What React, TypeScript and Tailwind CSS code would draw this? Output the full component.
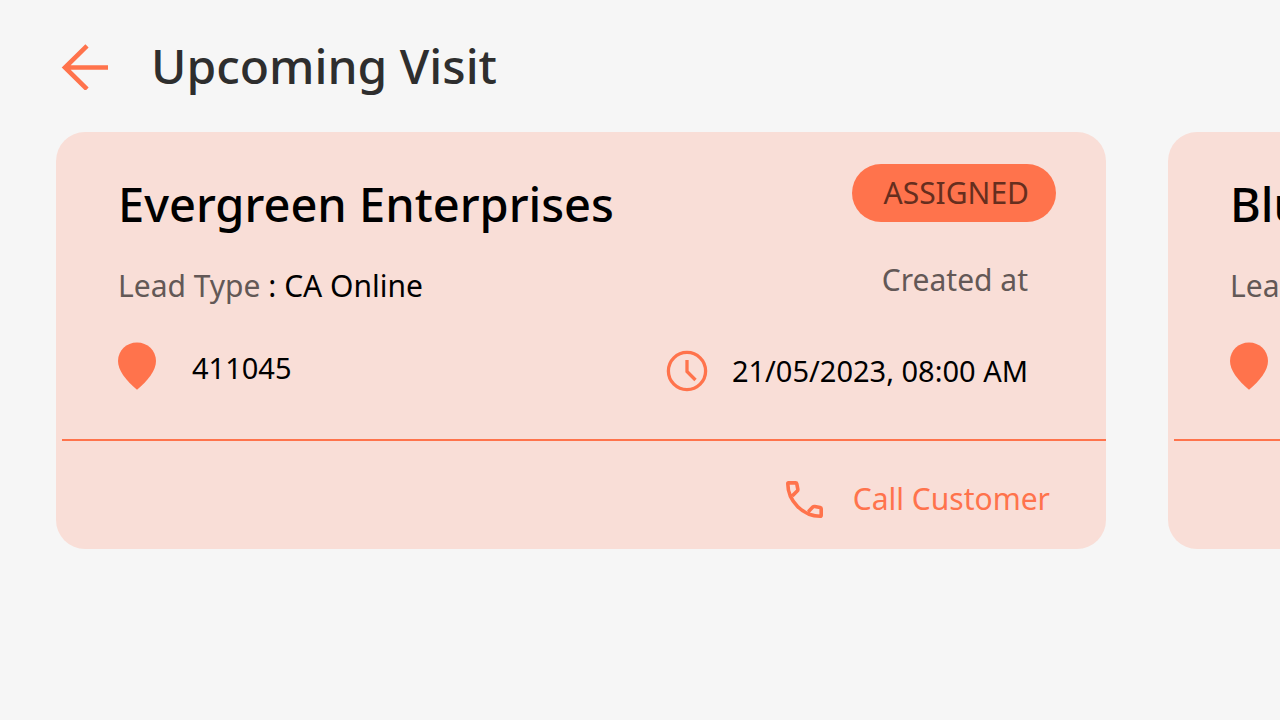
import React from "react";

type Visit = {
  name: string;
  leadType: string;
  pincode: string;
  createdAt: string;
  status: string;
  phone: string;
};

const visits: Visit[] = [
  {
    name: "Evergreen Enterprises",
    leadType: "CA Online",
    pincode: "411045",
    createdAt: "21/05/2023, 08:00 AM",
    status: "ASSIGNED",
    phone: "tel:+910000000001",
  },
  {
    name: "Blue Star Traders",
    leadType: "CA Online",
    pincode: "411045",
    createdAt: "21/05/2023, 08:00 AM",
    status: "ASSIGNED",
    phone: "tel:+910000000002",
  },
];

function ArrowLeft() {
  return (
    <svg viewBox="0 0 48 48" className="size-12" fill="none" stroke="currentColor" strokeWidth="4.6" aria-hidden="true">
      <path d="M47 25.500H4M26 3.800 4 25.500l22 21.700" />
    </svg>
  );
}

function Pin() {
  return (
    <svg viewBox="0 0 38 48" className="h-12 w-[38px]" fill="currentColor" aria-hidden="true">
      <path d="M19 .5C8.5.5 0 8.500 0 19c0 9.500 8 19.500 19 28.700 11-9.200 19-19.200 19-28.700C38 8.500 29.500.5 19 .5z" />
    </svg>
  );
}

function Clock() {
  return (
    <svg viewBox="0 0 42 42" className="size-[42px]" fill="none" stroke="currentColor" strokeWidth="3.3" aria-hidden="true">
      <circle cx="21" cy="21" r="18.6" />
      <path d="M21 10v11.500l8.500 8.500" />
    </svg>
  );
}

function Phone() {
  return (
    <svg viewBox="0 0 37 37" className="size-[37px]" fill="none" stroke="currentColor" strokeWidth="3.600" strokeLinejoin="round" aria-hidden="true">
      <path d="M2.500 1.900H9.600Q10.600 1.900 10.800 2.900L11.800 8.200Q12 9.300 11.200 10.100L6.300 14.900M22.300 30.700 26.800 26.100Q27.600 25.300 28.700 25.500L34.200 26.600Q35.200 26.800 35.200 27.800V34.200Q35.200 35.200 34.200 35.200C17 35.200 1.800 20 1.800 2.800Q1.800 1.900 2.500 1.900" />
    </svg>
  );
}

function VisitCard({ visit }: { visit: Visit }) {
  return (
    <article className="w-[1050px] shrink-0 rounded-[29px] bg-[#f9ded7] text-[30px] leading-10">
      <div className="flex justify-between pb-[47px] pl-[62px] pr-[50px] pt-8">
        <div className="pt-2">
          <h2 className="text-[47px] font-medium leading-[64px] text-black">{visit.name}</h2>
          <p className="mt-[30px]">
            <span className="text-[#635856]">Lead Type</span> : {visit.leadType}
          </p>
          <div className="mt-9 flex items-center gap-9">
            <span className="text-[#ff734c]">
              <Pin />
            </span>
            <span className="pt-1 text-[29px]">{visit.pincode}</span>
          </div>
        </div>
        <div className="flex flex-col items-end">
          <span className="rounded-[29px] bg-[#ff734c] py-[9px] pl-8 pr-[27px] text-[#662e1e]">{visit.status}</span>
          <p className="mr-7 mt-[38px] text-[#635856]">Created at</p>
          <div className="mr-7 mt-[50px] flex items-center gap-6">
            <span className="text-[#ff734c]">
              <Clock />
            </span>
            <time className="text-[29px]">{visit.createdAt}</time>
          </div>
        </div>
      </div>
      <div className="ml-1.5 border-t-2 border-[#ff734c]" />
      <div className="flex justify-end pb-[30px] pl-[62px] pr-14 pt-[38px]">
        <a href={visit.phone} className="flex items-center gap-[30px] text-[#ff734c]">
          <Phone />
          Call Customer
        </a>
      </div>
    </article>
  );
}

export default function App() {
  return (
    <main className="min-h-screen bg-[#f6f6f6] font-['Noto_Sans',sans-serif] text-black">
      <header className="flex items-center gap-[42px] px-[61px] pb-[34px] pt-[34px]">
        <button type="button" aria-label="Go back" className="text-[#ff734c]">
          <ArrowLeft />
        </button>
        <h1 className="text-5xl font-medium leading-[64px] text-[#2e2e2e]">Upcoming Visit</h1>
      </header>
      <section aria-label="Upcoming visits" className="flex gap-[62px] overflow-x-auto px-14 [scrollbar-width:none]">
        {visits.map((visit) => (
          <VisitCard key={visit.name} visit={visit} />
        ))}
      </section>
    </main>
  );
}
